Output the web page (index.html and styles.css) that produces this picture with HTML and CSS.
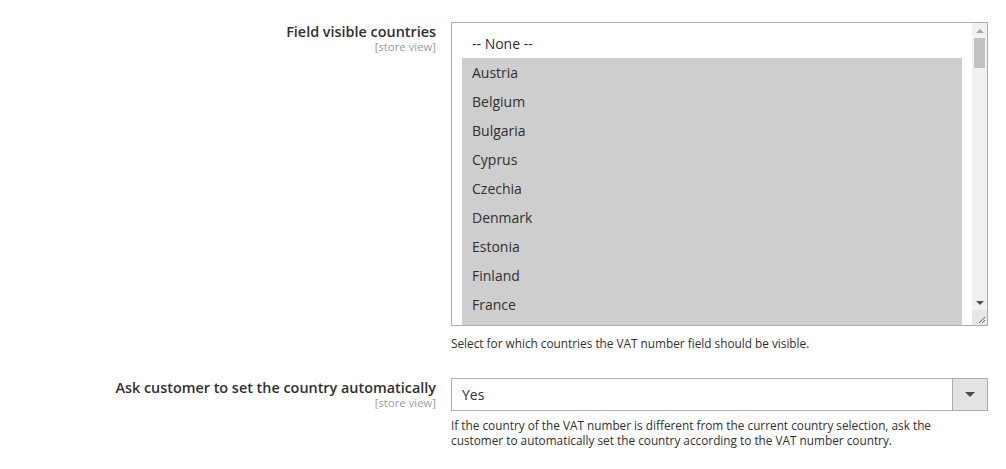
FILE: index.html
```html
<!DOCTYPE html>
<html>
<head>
<meta charset="utf-8">
<link rel="stylesheet" href="styles.css">
</head>
<body>
<div class="form">
  <div class="row">
    <div class="label">
      <span class="label-text">Field visible countries</span>
      <span class="scope">[store view]</span>
    </div>
    <div class="control">
      <div class="multiselect">
        <div class="list">
          <div class="opt">-- None --</div>
          <div class="opt sel">Austria</div>
          <div class="opt sel">Belgium</div>
          <div class="opt sel">Bulgaria</div>
          <div class="opt sel">Cyprus</div>
          <div class="opt sel">Czechia</div>
          <div class="opt sel">Denmark</div>
          <div class="opt sel">Estonia</div>
          <div class="opt sel">Finland</div>
          <div class="opt sel">France</div>
          <div class="opt sel"></div>
        </div>
        <div class="scrollbar">
          <div class="sb-arrow sb-up"></div>
          <div class="sb-track"><div class="sb-thumb"></div></div>
          <div class="sb-arrow sb-down"></div>
          <div class="resizer">
            <svg width="15" height="15" viewBox="0 0 15 15"><path d="M13 7 L7 13 M13 10 L10 13" stroke="#6b6b6b" stroke-width="1" fill="none"/></svg>
          </div>
        </div>
      </div>
      <div class="note note-first">Select for which countries the VAT number field should be visible.</div>
    </div>
  </div>
  <div class="row row-second">
    <div class="label">
      <span class="label-text">Ask customer to set the country automatically</span>
      <span class="scope">[store view]</span>
    </div>
    <div class="control">
      <div class="select">
        <span class="select-value">Yes</span>
        <span class="select-btn"><span class="caret"></span></span>
      </div>
      <div class="note note-second">If the country of the VAT number is different from the current country selection, ask the customer to automatically set the country according to the VAT number country.</div>
    </div>
  </div>
</div>
</body>
</html>
```
FILE: styles.css
```css
html, body {
  margin: 0;
  padding: 0;
  background: #fff;
}
body {
  font-family: "Open Sans", "Noto Sans", sans-serif;
  color: #303030;
}
.form {
  padding-top: 22px;
}
.row {
  display: grid;
  grid-template-columns: 436px 537px;
  column-gap: 15px;
}
.row-second {
  margin-top: 27px;
}
.label {
  display: flex;
  flex-direction: column;
  align-items: flex-end;
  text-align: right;
}
.label-text {
  font-size: 14.4px;
  font-weight: 600;
  line-height: 19px;
  color: #303030;
}
.scope {
  font-size: 11px;
  line-height: 12px;
  letter-spacing: 0.15px;
  color: #999;
}
.multiselect {
  display: flex;
  height: 302px;
  border: 1px solid #adadad;
  overflow: hidden;
}
.list {
  flex: 1;
  padding: 6px 10px 0 10px;
  overflow: hidden;
}
.opt {
  height: 29px;
  line-height: 29px;
  font-size: 14px;
  padding-left: 10px;
  color: #303030;
}
.opt.sel {
  background: #cecece;
}
.scrollbar {
  width: 15px;
  display: flex;
  flex-direction: column;
  background: #f1f1f1;
}
.sb-arrow {
  height: 15px;
  display: flex;
  align-items: center;
  justify-content: center;
}
.sb-up::before {
  content: "";
  border-left: 4px solid transparent;
  border-right: 4px solid transparent;
  border-bottom: 4px solid #a3a3a3;
}
.sb-down::before {
  content: "";
  border-left: 4px solid transparent;
  border-right: 4px solid transparent;
  border-top: 4px solid #505050;
}
.sb-track {
  flex: 1;
  padding: 0 2px;
}
.sb-thumb {
  height: 30px;
  background: #c1c1c1;
}
.resizer {
  height: 15px;
  background: #e6e6e6;
}
.resizer svg {
  display: block;
}
.note {
  font-size: 11.8px;
  line-height: 15px;
  color: #303030;
}
.note-first {
  margin-top: 10px;
}
.note-second {
  margin-top: 7px;
  padding-right: 20px;
}
.select {
  display: flex;
  height: 31px;
  border: 1px solid #adadad;
  background: #fff;
}
.select-value {
  flex: 1;
  font-size: 14px;
  line-height: 31px;
  padding-left: 10px;
}
.select-btn {
  width: 34px;
  border-left: 1px solid #adadad;
  background: #e3e3e3;
  display: flex;
  align-items: center;
  justify-content: center;
}
.caret {
  width: 0;
  height: 0;
  border-left: 5px solid transparent;
  border-right: 5px solid transparent;
  border-top: 5px solid #514943;
}
```
